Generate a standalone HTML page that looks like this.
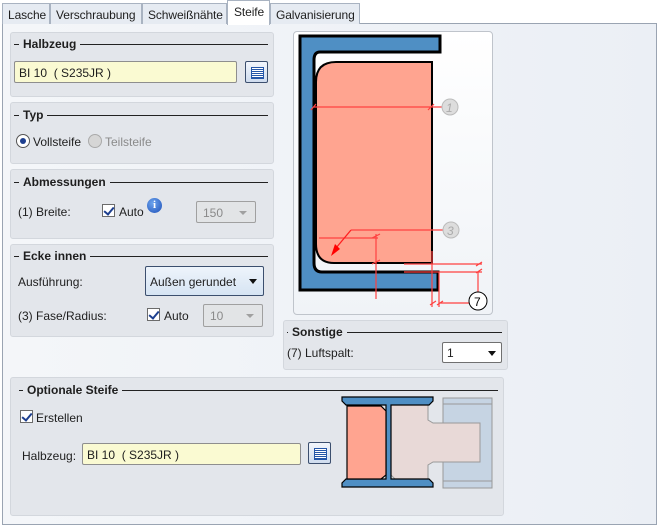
<!DOCTYPE html>
<html><head><meta charset="utf-8"><style>
*{box-sizing:border-box}
body{margin:0;width:662px;height:523px;background:#fff;font-family:"Liberation Sans",sans-serif;font-size:12px;color:#1e1e1e;position:relative;overflow:hidden}
.a{position:absolute}
.tab{position:absolute;top:3px;height:21px;border:1px solid #a9b3c1;border-bottom:none;background:#e6ebf2;padding:4px 0 0 5px;font-size:12px;letter-spacing:-0.1px;white-space:nowrap;overflow:hidden}
.panel{position:absolute;left:2px;top:23px;width:655px;height:502px;border:1px solid #9aa4b2;background:linear-gradient(90deg,#f4f6f9,#ebeff5)}
.grp{position:absolute;background:#e3e6eb;border:1px solid #d3d7dd;border-radius:3px}
.tt{position:absolute;font-weight:bold;font-size:12px;background:#e3e6eb;padding:0 4px;z-index:2}
.ln{position:absolute;height:1px;background:#222}
.inp{position:absolute;background:#fafad2;border:1px solid #8e8e8e;border-radius:2px;padding:4px 0 0 4px;font-size:12px}
.btn{position:absolute;width:23px;height:22px;border:1px solid #3c4f6e;border-radius:2px;background:linear-gradient(#f2f6fc,#cfdcee)}
.btn:after{content:"";position:absolute;left:5px;top:5px;width:11px;height:10px;border:1px solid #2456a8;background:repeating-linear-gradient(#fff 0 1px,#2456a8 1px 2px)}
.cb{position:absolute;width:13px;height:13px;border:1px solid #6b6b6b;background:#fff}
.cb:after{content:"";position:absolute;left:3px;top:0px;width:4px;height:8px;border:solid #1d3f8f;border-width:0 2px 2px 0;transform:rotate(40deg)}
.cmb{position:absolute;border:1px solid #a0a0a0;border-radius:2px;background:#e2e4e6;color:#8a8a8a;padding:4px 0 0 6px;font-size:12px}
.cmb:after{content:"";position:absolute;right:8px;top:9px;border:4px solid transparent;border-top:4px solid #a0a0a0}
.l{position:absolute;font-size:12px}
</style></head><body>
<div class="panel"></div>
<div class="tab" style="left:2px;width:48px">Lasche</div>
<div class="tab" style="left:50px;width:92px">Verschraubung</div>
<div class="tab" style="left:142px;width:85px">Schweißnähte</div>
<div class="tab" style="left:227px;top:0;height:25px;width:43px;background:#fff;padding-top:4px;padding-left:6px;z-index:2">Steife</div>
<div class="tab" style="left:270px;width:90px">Galvanisierung</div>

<div class="grp" style="left:10px;top:32px;width:264px;height:65px"></div>
<div class="ln" style="left:14px;top:44px;width:254px"></div><div class="tt" style="left:19px;top:37px">Halbzeug</div>
<div class="inp" style="left:14px;top:61px;width:223px;height:22px">BI 10 &nbsp;( S235JR )</div>
<div class="btn" style="left:245px;top:61px"></div>

<div class="grp" style="left:10px;top:102px;width:264px;height:62px"></div>
<div class="ln" style="left:14px;top:115px;width:254px"></div><div class="tt" style="left:19px;top:108px">Typ</div>
<div class="a" style="left:16px;top:134px;width:14px;height:14px;border-radius:50%;border:1px solid #555;background:#fff"><div class="a" style="left:3px;top:3px;width:6px;height:6px;border-radius:50%;background:#1d3f8f"></div></div>
<div class="l" style="left:33px;top:135px">Vollsteife</div>
<div class="a" style="left:88px;top:134px;width:14px;height:14px;border-radius:50%;border:1px solid #aaa;background:#d6d6d6"></div>
<div class="l" style="left:105px;top:135px;color:#8a8a8a">Teilsteife</div>

<div class="grp" style="left:10px;top:169px;width:264px;height:70px"></div>
<div class="ln" style="left:14px;top:182px;width:254px"></div><div class="tt" style="left:19px;top:175px">Abmessungen</div>
<div class="l" style="left:18px;top:205px">(1) Breite:</div>
<div class="cb" style="left:102px;top:204px"></div>
<div class="l" style="left:119px;top:205px">Auto</div>
<div class="a" style="left:147px;top:198px;width:15px;height:15px;border-radius:50%;background:radial-gradient(circle at 40% 35%,#6fa6ee,#1c4fb8);color:#fff;font-weight:bold;font-size:11px;text-align:center;line-height:15px;font-family:'Liberation Serif',serif">i</div>
<div class="cmb" style="left:196px;top:201px;width:60px;height:22px">150</div>

<div class="grp" style="left:10px;top:244px;width:264px;height:93px"></div>
<div class="ln" style="left:14px;top:256px;width:254px"></div><div class="tt" style="left:19px;top:249px">Ecke innen</div>
<div class="l" style="left:18px;top:275px">Ausführung:</div>
<div class="a" style="left:145px;top:266px;width:119px;height:30px;border:1px solid #3c4f6e;border-radius:2px;background:linear-gradient(#eef4fb,#d6e4f3);padding:8px 0 0 4px;font-size:12px">Außen gerundet<div class="a" style="right:6px;top:12px;border:4px solid transparent;border-top:5px solid #111"></div></div>
<div class="l" style="left:18px;top:309px">(3) Fase/Radius:</div>
<div class="cb" style="left:147px;top:308px"></div>
<div class="l" style="left:164px;top:309px">Auto</div>
<div class="cmb" style="left:203px;top:304px;width:60px;height:23px">10</div>

<div class="a" style="left:293px;top:31px;width:200px;height:284px;border:1px solid #bfc4cb;border-radius:4px;background:linear-gradient(#fff,#f0f3f7)"></div>
<svg class="a" style="left:0;top:0" width="662" height="523">
<path d="M300 36H440V52H320Q314 52 314 60V263Q314 272 322 272H438V290H300Z" fill="#4f8fc4" stroke="#000" stroke-width="3"/>
<path d="M316 82Q316 62 336 62H432V263H334Q316 263 316 244Z" fill="#ffa490" stroke="#000" stroke-width="2"/>
<g stroke="#ff4040" stroke-width="1.2" fill="none">
<path d="M313 107H445M311 110L316 104M428 110L434 104"/>
<path d="M351 230H444M319 238H378M376 234V299M372 238L380 234M372 264L380 260M404 264H482M404 272H482M476 266L482 262M476 273L482 269M478 272V293M432 251V307M439 272V307M430 305L436 301M437 305L443 301M439 303H470"/>
</g>
<path d="M351 230L336 248" stroke="#ff2020" stroke-width="1.3"/><path d="M331 256L335 244L340 249Z" fill="#f00"/>
<circle cx="450" cy="107" r="8" fill="#ddd" stroke="#bbb"/><text x="446" y="112" font-size="12" font-style="italic" fill="#aaa" font-family="Liberation Sans">1</text>
<circle cx="451" cy="230" r="8" fill="#ddd" stroke="#bbb"/><text x="447" y="235" font-size="12" font-style="italic" fill="#aaa" font-family="Liberation Sans">3</text>
<circle cx="478" cy="301" r="9" fill="#fff" stroke="#000"/><text x="474" y="306" font-size="12" fill="#000" font-family="Liberation Sans">7</text>
</svg>

<div class="grp" style="left:283px;top:320px;width:225px;height:50px"></div>
<div class="ln" style="left:287px;top:332px;width:215px"></div><div class="tt" style="left:288px;top:325px">Sonstige</div>
<div class="l" style="left:287px;top:346px">(7) Luftspalt:</div>
<div class="a" style="left:442px;top:342px;width:60px;height:21px;border:1px solid #707070;border-radius:2px;background:#fff;padding:3px 0 0 4px;font-size:12px">1<div class="a" style="right:5px;top:8px;border:4px solid transparent;border-top:5px solid #111"></div></div>

<div class="grp" style="left:10px;top:377px;width:494px;height:139px"></div>
<div class="ln" style="left:19px;top:390px;width:479px"></div><div class="tt" style="left:23px;top:383px">Optionale Steife</div>
<div class="cb" style="left:20px;top:410px"></div>
<div class="l" style="left:36px;top:411px">Erstellen</div>
<div class="l" style="left:22px;top:449px">Halbzeug:</div>
<div class="inp" style="left:82px;top:443px;width:219px;height:22px">BI 10 &nbsp;( S235JR )</div>
<div class="btn" style="left:308px;top:442px"></div>
<svg class="a" style="left:0;top:0" width="662" height="523">
<rect x="443" y="398" width="49" height="90" fill="#c6d4e3" stroke="#999"/>
<path d="M443 404H492M443 481H492" stroke="#999"/>
<path d="M390 406L395 401H428V420L433 423H480V462H433L428 465V479H395L390 474Z" fill="#e8d9d7" stroke="#999"/>
<path d="M342 397H433V401L429 405H391V479H429L433 483V487H342V483L346 479H386V405H346L342 401Z" fill="#4f8fc4" stroke="#000" stroke-width="1.2"/>
<path d="M347 406H381L386 411V475L381 479H347Z" fill="#ffa490" stroke="#000" stroke-width="1.2"/>
</svg>
</body></html>
